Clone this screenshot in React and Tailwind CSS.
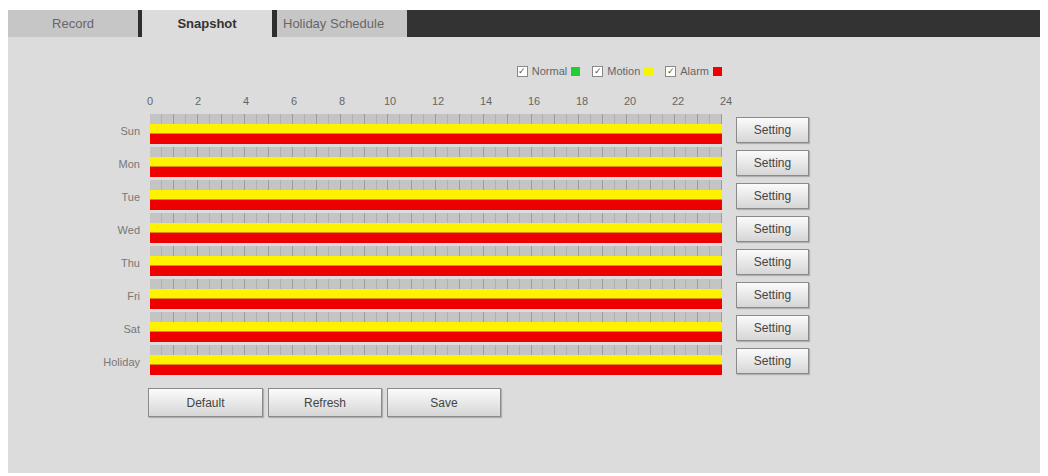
import React from 'react'

const days = ['Sun', 'Mon', 'Tue', 'Wed', 'Thu', 'Fri', 'Sat', 'Holiday']
const hours = [0, 2, 4, 6, 8, 10, 12, 14, 16, 18, 20, 22, 24]
const font = { fontFamily: "'Liberation Sans', Arial, sans-serif" }

function Btn({ children, className }) {
    return (
        <button
            className={'border border-[#8a8a8a] bg-gradient-to-b from-[#fbfbfb] to-[#d6d6d6] text-[12px] text-[#444] shadow-[1px_1px_1px_rgba(0,0,0,0.2)] ' + className}
        >
            {children}
        </button>
    )
}

function Ticks() {
    return (
        <div className="flex h-[10px] bg-[#c4c4c4]">
            {Array.from({ length: 48 }).map((_, i) => (
                <div key={i} className={'flex-1 border-r ' + (i % 2 ? 'border-[#9c9c9c]' : 'border-[#b0b0b0]')} />
            ))}
        </div>
    )
}

export default function App() {
    return (
        <div className="bg-white w-[1048px] h-[476px] pt-[10px] pl-[8px]" style={font}>
            <div className="w-[1032px] h-[463px] bg-[#dcdcdc]">
                <div className="flex h-[27px] text-[13px]">
                    <div className="w-[130px] bg-[#c6c6c6] flex items-center justify-center text-[#666]">Record</div>
                    <div className="w-[4px] bg-[#2e2e2e]" />
                    <div className="w-[130px] flex items-center justify-center font-bold text-[#333]">Snapshot</div>
                    <div className="w-[5px] bg-[#2e2e2e]" />
                    <div className="w-[130px] bg-[#c6c6c6] flex items-center pl-[6px] text-[#666]">Holiday Schedule</div>
                    <div className="flex-1 bg-[#333]" />
                </div>

                <div className="flex justify-end pr-[318px] mt-[26px] gap-[12px] text-[11px] text-[#666] items-center">
                    {[['Normal', '#22cc33'], ['Motion', '#f5f500'], ['Alarm', '#ee0000']].map(([n, c]) => (
                        <div key={n} className="flex items-center gap-[4px]">
                            <span className="w-[11px] h-[11px] border border-[#888] bg-white text-[9px] leading-[9px] text-center text-[#555]">✓</span>
                            <span>{n}</span>
                            <span className="w-[9px] h-[9px]" style={{ background: c }} />
                        </div>
                    ))}
                </div>

                <div className="flex mt-[13px] ml-[142px] w-[576px] justify-between text-[11px] text-[#666]">
                    {hours.map((h) => (
                        <span key={h} className="w-0 flex justify-center">{h}</span>
                    ))}
                </div>

                <div className="mt-[5px] flex flex-col">
                    {days.map((d) => (
                        <div key={d} className="flex h-[33px]">
                            <div className="w-[134px] text-right text-[11px] text-[#777] pt-[9px] pr-[2px]">{d}</div>
                            <div className="w-[572px] ml-[8px]">
                                <Ticks />
                                <div className="h-[10px] bg-[#fff200] border-b border-[#e08a00]" />
                                <div className="h-[10px] bg-[#ee0000]" />
                            </div>
                            <div className="ml-[14px] pt-[3px]">
                                <Btn className="w-[73px] h-[26px]">Setting</Btn>
                            </div>
                        </div>
                    ))}
                </div>

                <div className="flex gap-[5px] ml-[140px] mt-[10px]">
                    <Btn className="w-[115px] h-[29px]">Default</Btn>
                    <Btn className="w-[114px] h-[29px]">Refresh</Btn>
                    <Btn className="w-[114px] h-[29px]">Save</Btn>
                </div>
            </div>
        </div>
    )
}
